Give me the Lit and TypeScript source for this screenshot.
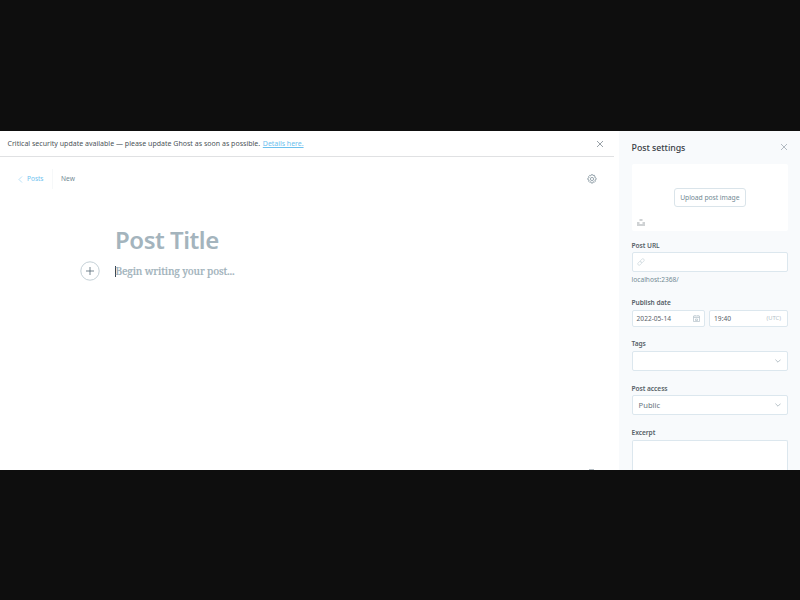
import { LitElement, html, css } from "lit";
import { customElement } from "lit/decorators.js";

const cross = html`<svg class="cross" viewBox="0 0 8 8"><path d="M1 1l6 6M7 1L1 7" /></svg>`;
const chevron = html`<svg class="chevron" viewBox="0 0 6 4"><path d="M.4 .6L3 3.2L5.6 .6" /></svg>`;

@customElement("post-editor")
export class PostEditor extends LitElement {
  static styles = css`
    :host { display: flex; flex-direction: column; flex: none; width: 618.6px; background: #fff; white-space: nowrap; }
    * { box-sizing: border-box; }
    svg { display: block; fill: none; flex: none; }
    .alert { display: flex; align-items: center; flex: none; height: 26px; width: 613.7px; padding: 0 9.4px 0 7.5px; border-bottom: 1px solid #e0e1e3; color: #4b5358; font-size: 7px; line-height: 10px; }
    .message { letter-spacing: 0.015px; width: 255.3px; }
    .link { color: #6cc0ee; text-decoration: underline; letter-spacing: -.03px; }
    .cross { width: 8px; height: 8px; margin-left: auto; stroke: #626d79; stroke-width: .65; }
    .nav { display: flex; align-items: center; flex: none; height: 20px; margin-top: 12px; padding: 0 22px 0 18px; font-size: 6.6px; line-height: 20px; color: #738a94; }
    .back { width: 5px; height: 7px; margin: 0 4px 0 0; stroke: #8ccdf2; stroke-width: .6; }
    .posts { color: #6fc2ef; width: 25px; letter-spacing: -.05px; }
    .current { border-left: 1px solid #f6f8f9; padding-left: 8px; letter-spacing: .05px; }
    .gear { width: 10px; height: 10px; margin-left: auto; stroke: #7c8e98; stroke-width: .75; }
    .title { margin: 35px 0 0 115px; font-size: 24px; line-height: 32px; font-weight: 600; letter-spacing: -.47px; color: #a4b4bd; }
    .body { display: flex; align-items: center; flex: none; height: 20px; margin: 5.3px 0 0 80px; }
    .plus { width: 20px; height: 20px; stroke: #536873; stroke-width: .8; }
    .ring { stroke: #b5c4cc; }
    .caret { width: 1px; height: 11px; margin-left: 15px; background: #3d4850; }
    .placeholder { font: 500 10.1px/14px "Noto Serif", "DejaVu Serif", "Liberation Serif", serif; -webkit-text-stroke: .2px #9fb2bb; letter-spacing: -.15px; margin-left: -.5px; color: #9fb2bb; }
    .mark { margin: auto 25px 0 auto; width: 5px; height: 1px; background: #b4bdc3; }
  `;
  render() {
    return html`
      <div class="alert"><span class="message">Critical security update available — please update Ghost as soon as possible.</span><span class="link">Details here.</span>${cross}</div>
      <div class="nav">
        <svg class="back" viewBox="0 0 5 7"><path d="M4 .5L1 3.5L4 6.5" /></svg>
        <span class="posts">Posts</span><span class="current">New</span>
        <svg class="gear" viewBox="0 0 10 10"><circle cx="5" cy="5" r="1.6" /><path d="M4.3 .6h1.4l.3 1.1 1.1-.6 1 .9-.6 1.2 1.6.8v1.6l-1.3.4.6 1.2-1.1 1.1-1.2-.6-.4 1.4H4.3L3.9 7.7l-1.2.6-1.1-1.1.6-1.2L.8 5.6V4.2l1.4-.6-.6-1.2 1.1-1 1.2.5z" /></svg>
      </div>
      <div class="title">Post Title</div>
      <div class="body">
        <svg class="plus" viewBox="0 0 20 20"><circle class="ring" cx="10" cy="10" r="9.2" /><path d="M6 10h8M10 6v8" /></svg>
        <span class="caret"></span><span class="placeholder">Begin writing your post...</span>
      </div>
      <div class="mark"></div>`;
  }
}

@customElement("post-settings")
export class PostSettings extends LitElement {
  static styles = css`
    :host { display: flex; flex-direction: column; flex: 1; min-width: 0; padding: 0 12px 0 13px; background: #f8fafc; white-space: nowrap; color: #566069; font-size: 6.6px; }
    * { box-sizing: border-box; }
    svg { display: block; fill: none; flex: none; }
    .head { display: flex; align-items: center; flex: none; height: 33px; font-size: 8.8px; font-weight: 500; letter-spacing: -.05px; color: #394047; }
    .cross { width: 8px; height: 8px; margin: -1px 0 0 auto; stroke: #8b98a2; stroke-width: .65; }
    .upload { display: grid; place-items: center; position: relative; flex: none; height: 67px; background: #fff; border-radius: 2px; }
    .button { border: 1px solid #dae4ea; border-radius: 3px; height: 19px; width: 72px; line-height: 18px; text-align: center; color: #738a94; font-size: 6.8px; letter-spacing: -.07px; }
    .unsplash { position: absolute; left: 5.5px; bottom: 5px; width: 8px; height: 7px; fill: #cfd2d4; }
    .label { flex: none; height: 10px; line-height: 10px; font-weight: 600; letter-spacing: -.06px; margin-bottom: 1.5px; color: #565f67; }
    .field { display: flex; align-items: center; flex: none; height: 20px; padding: 0 6px; background: #fff; border: 1px solid #dce7ee; border-radius: 2px; }
    .url { margin-top: 9.5px; }
    .link { width: 8px; height: 8px; margin-left: -1.5px; stroke: #d3dde2; stroke-width: .8; }
    .hint { flex: none; line-height: 10px; margin-top: 3px; color: #738a94; }
    .date { margin-top: 13px; }
    .row { display: flex; flex: none; gap: 4.5px; }
    .row .field { height: 17px; padding: 0 4px; justify-content: space-between; }
    .day { width: 73px; }
    .time { flex: 1; }
    .zone { color: #b4c1c8; font-size: 5.8px; padding-right: 2px; }
    .calendar { width: 7px; height: 7px; stroke: #b3c0c8; stroke-width: .7; }
    .tags { margin-top: 12.5px; }
    .access { margin-top: 13px; }
    .excerpt { margin-top: 13px; }
    .chevron { width: 6px; height: 4px; margin-left: auto; stroke: #9aa9b2; stroke-width: .7; }
    .public { font-size: 7.6px; color: #69747d; line-height: 10px; }
    .area { flex: 1; border-bottom: 0; border-radius: 2px 2px 0 0; }
  `;
  render() {
    return html`
      <div class="head"><span>Post settings</span>${cross}</div>
      <div class="upload">
        <div class="button">Upload post image</div>
        <svg class="unsplash" viewBox="0 0 8 7"><path d="M2.5 0h3v2h-3zM0 3h2.5v2h3V3H8v4H0z" /></svg>
      </div>
      <div class="label url">Post URL</div>
      <div class="field"><svg class="link" viewBox="0 0 8 8"><g transform="rotate(-45 4 4)"><rect x="0" y="2.6" width="4.4" height="2.8" rx="1.4" /><rect x="3.6" y="2.6" width="4.4" height="2.8" rx="1.4" /></g></svg></div>
      <div class="hint">localhost:2368/</div>
      <div class="label date">Publish date</div>
      <div class="row">
        <div class="field day"><span>2022-05-14</span><svg class="calendar" viewBox="0 0 7 7"><path d="M.5 1h6v5.5h-6zM.5 2.5h6M2 0v1M5 0v1M2.5 4h2v1.5h-2z" /></svg></div>
        <div class="field time"><span>19:40</span><span class="zone">(UTC)</span></div>
      </div>
      <div class="label tags">Tags</div>
      <div class="field">${chevron}</div>
      <div class="label access">Post access</div>
      <div class="field"><span class="public">Public</span>${chevron}</div>
      <div class="label excerpt">Excerpt</div>
      <div class="field area"></div>`;
  }
}

@customElement("app-root")
export class AppRoot extends LitElement {
  static styles = css`
    :host { display: flex; flex-direction: column; justify-content: center; width: 800px; height: 600px; padding-top: 1px; box-sizing: border-box; overflow: hidden; background: #0e0e0e; font-family: "Noto Sans", "Open Sans", sans-serif; }
    .screen { display: flex; height: 339px; overflow: hidden; }
  `;
  render() {
    return html`<div class="screen"><post-editor></post-editor><post-settings></post-settings></div>`;
  }
}
